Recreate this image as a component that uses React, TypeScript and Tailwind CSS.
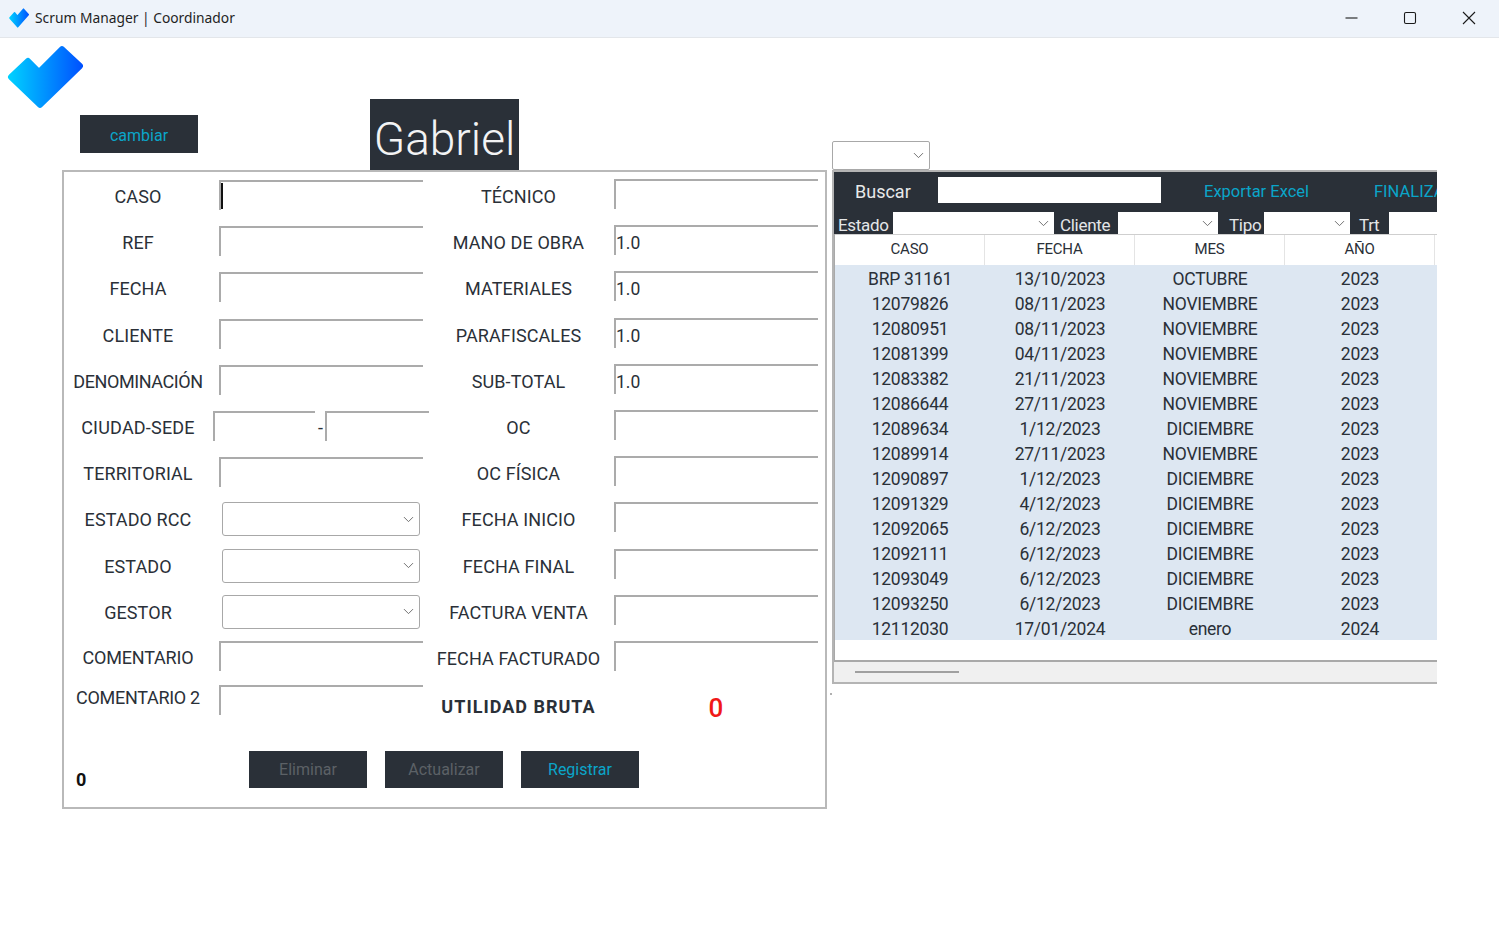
import React from "react";
import { ChevronDown } from "lucide-react";

const leftFields = ["CASO", "REF", "FECHA", "CLIENTE", "DENOMINACIÓN"];
const rightFields = [
    ["TÉCNICO", ""],
    ["MANO DE OBRA", "1.0"],
    ["MATERIALES", "1.0"],
    ["PARAFISCALES", "1.0"],
    ["SUB-TOTAL", "1.0"],
    ["OC", ""],
    ["OC FÍSICA", ""],
    ["FECHA INICIO", ""],
    ["FECHA FINAL", ""],
    ["FACTURA VENTA", ""],
    ["FECHA FACTURADO", ""],
];
const rows = [
    ["BRP 31161", "13/10/2023", "OCTUBRE", "2023"],
    ["12079826", "08/11/2023", "NOVIEMBRE", "2023"],
    ["12080951", "08/11/2023", "NOVIEMBRE", "2023"],
    ["12081399", "04/11/2023", "NOVIEMBRE", "2023"],
    ["12083382", "21/11/2023", "NOVIEMBRE", "2023"],
    ["12086644", "27/11/2023", "NOVIEMBRE", "2023"],
    ["12089634", "1/12/2023", "DICIEMBRE", "2023"],
    ["12089914", "27/11/2023", "NOVIEMBRE", "2023"],
    ["12090897", "1/12/2023", "DICIEMBRE", "2023"],
    ["12091329", "4/12/2023", "DICIEMBRE", "2023"],
    ["12092065", "6/12/2023", "DICIEMBRE", "2023"],
    ["12092111", "6/12/2023", "DICIEMBRE", "2023"],
    ["12093049", "6/12/2023", "DICIEMBRE", "2023"],
    ["12093250", "6/12/2023", "DICIEMBRE", "2023"],
    ["12112030", "17/01/2024", "enero", "2024"],
];

const Logo = ({ className, id }: { className: string; id: string }) => (
    <svg viewBox="0 0 76 64" preserveAspectRatio="none" className={className}>
        <defs>
            <linearGradient id={id} gradientUnits="userSpaceOnUse" x1="0" y1="0" x2="76" y2="0">
                <stop offset="0" stopColor="#00d4ff" />
                <stop offset="1" stopColor="#0050ff" />
            </linearGradient>
        </defs>
        <polygon
            points="4,32 21,16 32,27.2 55,4.2 73,21 33,59.8"
            fill={`url(#${id})`}
            stroke={`url(#${id})`}
            strokeWidth="6"
            strokeLinejoin="round"
        />
    </svg>
);

const TitleBar = () => (
    <div className="flex h-[38px] shrink-0 items-center border-b border-[#e3e6ea] bg-[#eef3fa] pb-[1px]">
        <Logo id="logo-small" className="ml-[9px] h-[20px] w-[20px]" />
        <span className="ml-[6px] font-['Noto_Sans'] text-[13.8px] text-[#1f1f1f]">Scrum Manager | Coordinador</span>
        <div className="ml-auto flex items-center pb-[1px]">
            <svg width="14" height="14" viewBox="0 0 14 14" className="mr-[45px]">
                <path d="M1.5 7h12" stroke="#1a1a1a" strokeWidth="1.1" />
            </svg>
            <svg width="14" height="14" viewBox="0 0 14 14" className="mr-[45px]">
                <rect x="1.5" y="1.5" width="11" height="11" rx="1.5" fill="none" stroke="#1a1a1a" strokeWidth="1.1" />
            </svg>
            <svg width="14" height="14" viewBox="0 0 14 14" className="mr-[23px]">
                <path d="M1 1l12 12M13 1L1 13" stroke="#1a1a1a" strokeWidth="1.1" />
            </svg>
        </div>
    </div>
);

const Field = ({ className, value, caret }: { className: string; value?: string; caret?: boolean }) => (
    <div className={`h-[30px] shrink-0 border-t-2 border-l-2 border-[#ababab] text-[17.5px] leading-[32px] ${className}`}>
        {caret && <div className="mt-[1px] h-[26px] w-[2px] bg-[#111]" />}
        {value}
    </div>
);

const Combo = ({ className }: { className: string }) => (
    <div className={`flex items-center justify-end bg-white ${className}`}>
        <ChevronDown size={17} strokeWidth={1.3} className="mr-[2px] text-[#666]" />
    </div>
);

const Label = ({ className, children }: { className: string; children: React.ReactNode }) => (
    <div className={`flex h-[30px] shrink-0 items-center justify-center whitespace-nowrap text-[18px] ${className}`}>
        {children}
    </div>
);

const ActionButton = ({ label, active }: { label: string; active?: boolean }) => (
    <div className={`flex h-[37px] w-[118px] items-center justify-center bg-[#2a3038] text-[16px] ${active ? "text-[#0aa5c9]" : "text-[#5c6166]"}`}>
        {label}
    </div>
);

const FormPanel = () => (
    <div className="ml-[62px] h-[639px] w-[765px] border-2 border-[#b9b9b9] text-[#2a3038]">
        <div className="flex h-[579px]">
            <div className="w-[359px] pt-[8px]">
                {leftFields.map((name, i) => (
                    <div key={name} className="flex h-[46.2px] items-start">
                        <Label className={`w-[148px] pt-[3px] ${name === "DENOMINACIÓN" ? "tracking-[-0.4px]" : "tracking-[0.1px]"}`}>{name}</Label>
                        <Field className="ml-[7px] w-[204px]" caret={i === 0} />
                    </div>
                ))}
                <div className="flex h-[46.2px] items-start">
                    <Label className="w-[148px] pt-[3px] tracking-[0.2px]">CIUDAD-SEDE</Label>
                    <Field className="ml-[1px] w-[102px]" />
                    <span className="ml-[3px] mr-[3px] mt-[5px] w-[4px] text-[18px] leading-[24px]">-</span>
                    <Field className="w-[104px]" />
                </div>
                <div className="flex h-[46.2px] items-start">
                    <Label className="w-[148px] pt-[3px] tracking-[0.1px]">TERRITORIAL</Label>
                    <Field className="ml-[7px] w-[204px]" />
                </div>
                {["ESTADO RCC", "ESTADO", "GESTOR"].map((name) => (
                    <div key={name} className="flex h-[46.2px] items-start">
                        <Label className="w-[148px] pt-[3px] tracking-[0.1px]">{name}</Label>
                        <Combo className="-mt-[1px] ml-[10px] h-[34px] w-[198px] rounded-[3px] border-[1.5px] border-[#a8a8a8]" />
                    </div>
                ))}
                <div className="flex h-[44px] items-start">
                    <Label className="w-[148px] pt-[2px] tracking-[-0.2px]">COMENTARIO</Label>
                    <Field className="-mt-[1px] ml-[7px] w-[204px]" />
                </div>
                <div className="flex items-start">
                    <Label className="w-[148px] pb-[7px] tracking-[-0.3px]">COMENTARIO 2</Label>
                    <Field className="-mt-[1px] ml-[7px] w-[204px]" />
                </div>
            </div>
            <div className="w-[395px] pt-[7px]">
                {rightFields.map(([name, value]) => (
                    <div key={name} className="flex h-[46.2px] items-start">
                        <Label className="w-[191px] pt-[5px] tracking-[0.1px]">{name}</Label>
                        <Field className="w-[204px]" value={value} />
                    </div>
                ))}
                <div className="flex items-start pt-[4px]">
                    <Label className="w-[191px] font-bold tracking-[1px]">UTILIDAD BRUTA</Label>
                    <div className="flex h-[30px] w-[204px] items-center justify-center pt-[5px] text-[26px] font-medium text-[#f01818]">0</div>
                </div>
            </div>
        </div>
        <div className="flex">
            <div className="mt-[17px] w-[185px] pl-[12px] text-[18px] leading-[24px] font-bold text-[#111]">0</div>
            <div className="flex gap-[18px]">
                <ActionButton label="Eliminar" />
                <ActionButton label="Actualizar" />
                <ActionButton label="Registrar" active />
            </div>
        </div>
    </div>
);

const FilterLabel = ({ className, children }: { className: string; children: React.ReactNode }) => (
    <span className={`shrink-0 text-[17px] leading-[26px] tracking-[-0.3px] text-[#e4e6e8] ${className}`}>{children}</span>
);

const CasesPanel = () => (
    <div className="h-[514px] w-[605px] overflow-hidden border-y-2 border-l-2 border-[#b4b4b4]">
        <div className="h-[62px] w-[603px] overflow-hidden bg-[#2a3038]">
            <div className="flex h-[40px] items-start pt-[5px]">
                <span className="ml-[21px] w-[83px] shrink-0 pt-[1px] text-[18px] leading-[28px] text-[#e8e9ea]">Buscar</span>
                <div className="h-[26px] w-[223px] shrink-0 bg-white" />
                <span className="ml-[43px] w-[170px] shrink-0 pt-[1px] text-[16.5px] leading-[28px] whitespace-nowrap text-[#0aa5c9]">Exportar Excel</span>
                <span className="pt-[1px] text-[16.5px] leading-[28px] whitespace-nowrap text-[#0aa5c9]">FINALIZAR</span>
            </div>
            <div className="flex h-[22px] overflow-hidden">
                <FilterLabel className="ml-[4px] w-[55px]">Estado</FilterLabel>
                <Combo className="h-[22px] w-[161px] shrink-0" />
                <FilterLabel className="ml-[6px] w-[58px]">Cliente</FilterLabel>
                <Combo className="h-[22px] w-[100px] shrink-0" />
                <FilterLabel className="ml-[11px] w-[35px]">Tipo</FilterLabel>
                <Combo className="h-[22px] w-[86px] shrink-0" />
                <FilterLabel className="ml-[9px] w-[30px]">Trt</FilterLabel>
                <div className="h-[22px] w-[60px] shrink-0 bg-white" />
            </div>
        </div>
        <div className="h-[428px] border-b-2 border-l border-[#a9a9a9]">
            <div className="flex h-[31px] border-t border-[#cfcfcf] bg-white pb-[2px] text-[15px] tracking-[-0.2px] text-[#2a3038]">
                {["CASO", "FECHA", "MES", "AÑO"].map((h) => (
                    <div key={h} className="-mb-[2px] flex w-[150px] items-center justify-center border-r border-[#e4e4e4] pb-[2px]">
                        {h}
                    </div>
                ))}
            </div>
            <div className="bg-[#dde7f2] text-[17.5px] tracking-[-0.25px] text-[#2a3038]">
                {rows.map((row) => (
                    <div key={row[0]} className="flex h-[25px] items-center pt-[4px]">
                        {row.map((cell, i) => (
                            <div key={i} className="w-[150px] text-center leading-[21px]">
                                {cell}
                            </div>
                        ))}
                    </div>
                ))}
            </div>
        </div>
        <div className="flex h-[20px] items-center bg-[#f0f0f0]">
            <div className="ml-[21px] h-[2px] w-[104px] bg-[#a0a0a0]" />
        </div>
    </div>
);

export default function App() {
    return (
        <div className="flex h-[936px] w-[1499px] flex-col overflow-hidden bg-white font-['Roboto',sans-serif]">
            <TitleBar />
            <div className="flex">
                <div className="w-[832px] shrink-0">
                    <div className="flex h-[132px] items-start">
                        <Logo id="logo-big" className="ml-[7px] mt-[7px] h-[64px] w-[76px] shrink-0" />
                        <div className="-ml-[3px] mt-[77px] flex h-[38px] w-[118px] shrink-0 items-center justify-center bg-[#2a3038] pt-[3px] text-[16px] text-[#0aa5c9]">
                            cambiar
                        </div>
                        <div className="ml-[172px] mt-[61px] flex h-[71px] w-[149px] shrink-0 items-center justify-center bg-[#2a3038] pt-[10px] text-[46px] font-light text-[#f2f3f4]">
                            Gabriel
                        </div>
                    </div>
                    <FormPanel />
                </div>
                <div className="w-[605px] shrink-0 pt-[103px]">
                    <Combo className="h-[29px] w-[98px] rounded-[2px] border-[1.5px] border-[#a8a8a8]" />
                    <CasesPanel />
                    <div className="-ml-[2px] mt-[9px] h-[2px] w-[2px] bg-[#b0b0b0]" />
                </div>
            </div>
        </div>
    );
}
